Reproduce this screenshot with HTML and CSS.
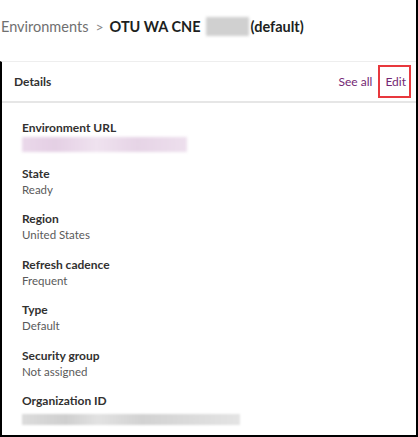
FILE: index.html
```html
<!DOCTYPE html>
<html>
<head>
<meta charset="utf-8">
<link rel="stylesheet" href="styles.css">
</head>
<body>
<div class="frame">
  <header class="crumbs">
    <span class="crumb-link">Environments</span>
    <span class="crumb-sep">&gt;</span>
    <span class="crumb-title">OTU WA CNE</span>
    <span class="blur-title"></span>
    <span class="crumb-title">(default)</span>
  </header>
  <section class="card">
    <div class="card-head">
      <span class="card-title">Details</span>
      <div class="card-actions">
        <span class="link">See all</span>
        <span class="link edit">Edit</span>
      </div>
    </div>
    <div class="fields">
      <div class="field">
        <div class="label">Environment URL</div>
        <div class="blur-url"></div>
      </div>
      <div class="field">
        <div class="label">State</div>
        <div class="value">Ready</div>
      </div>
      <div class="field">
        <div class="label">Region</div>
        <div class="value">United States</div>
      </div>
      <div class="field">
        <div class="label">Refresh cadence</div>
        <div class="value">Frequent</div>
      </div>
      <div class="field">
        <div class="label">Type</div>
        <div class="value">Default</div>
      </div>
      <div class="field">
        <div class="label">Security group</div>
        <div class="value">Not assigned</div>
      </div>
      <div class="field">
        <div class="label">Organization ID</div>
        <div class="blur-id"></div>
      </div>
    </div>
  </section>
</div>
</body>
</html>
```

FILE: styles.css
```css
html, body {
  margin: 0;
  padding: 0;
  background: #fff;
  overflow: hidden;
}
body {
  width: 418px;
  height: 437px;
  font-family: Lato, "Open Sans", sans-serif;
  color: #323130;
}
.frame {
  box-sizing: border-box;
  width: 418px;
  height: 437px;
  border-right: 2px solid #000;
  border-bottom: 2px solid #000;
  display: flex;
  flex-direction: column;
}
.crumbs {
  height: 61px;
  display: flex;
  align-items: center;
  padding-left: 1px;
  font-size: 14.5px;
  white-space: nowrap;
  box-sizing: border-box;
  padding-bottom: 8px;
}
.crumb-link {
  color: #707070;
}
.crumb-sep {
  color: #8a8a8a;
  margin: 0 6px 0 7px;
  font-size: 14px;
}
.crumb-title {
  color: #201f1e;
  font-weight: 700;
}
.blur-title {
  display: inline-block;
  width: 43px;
  height: 19px;
  margin: 0 2px 0 5px;
  background: #d0d0d0;
  filter: blur(1.5px);
}
.card {
  flex: 1;
  border-top: 1px solid #eeeeee;
  border-left: 2px solid #000;
  display: flex;
  flex-direction: column;
}
.card-head {
  height: 39px;
  display: flex;
  align-items: center;
  justify-content: space-between;
  padding: 0 5px 0 12px;
  border-bottom: 2px solid #e6e6e6;
}
.card-title {
  font-size: 12px;
  font-weight: 700;
  color: #323130;
}
.card-actions {
  display: flex;
  align-items: center;
  gap: 6px;
}
.link {
  color: #742774;
  font-size: 12px;
}
.edit {
  border: 2px solid #e8383d;
  padding: 7px 3px 7px 5px;
}
.fields {
  padding: 17px 0 0 20px;
  display: flex;
  flex-direction: column;
  gap: 13.5px;
}
.label {
  font-size: 12px;
  font-weight: 700;
  line-height: 16px;
  color: #323130;
}
.value {
  font-size: 11.5px;
  line-height: 16px;
  color: #5a5a5a;
}
.blur-url {
  width: 165px;
  height: 15px;
  margin-top: 1px;
  background: linear-gradient(90deg, #ead8ea 0%, #e4cfe4 20%, #efe2ef 45%, #e6d4e6 70%, #eddfed 100%);
  filter: blur(1.5px);
}
.blur-id {
  width: 218px;
  height: 11px;
  margin-top: 5px;
  background: linear-gradient(90deg, #dcdcdc 0%, #cfcfcf 20%, #e2e2e2 35%, #d2d2d2 55%, #dadada 75%, #e4e4e4 100%);
  filter: blur(1px);
}
```
